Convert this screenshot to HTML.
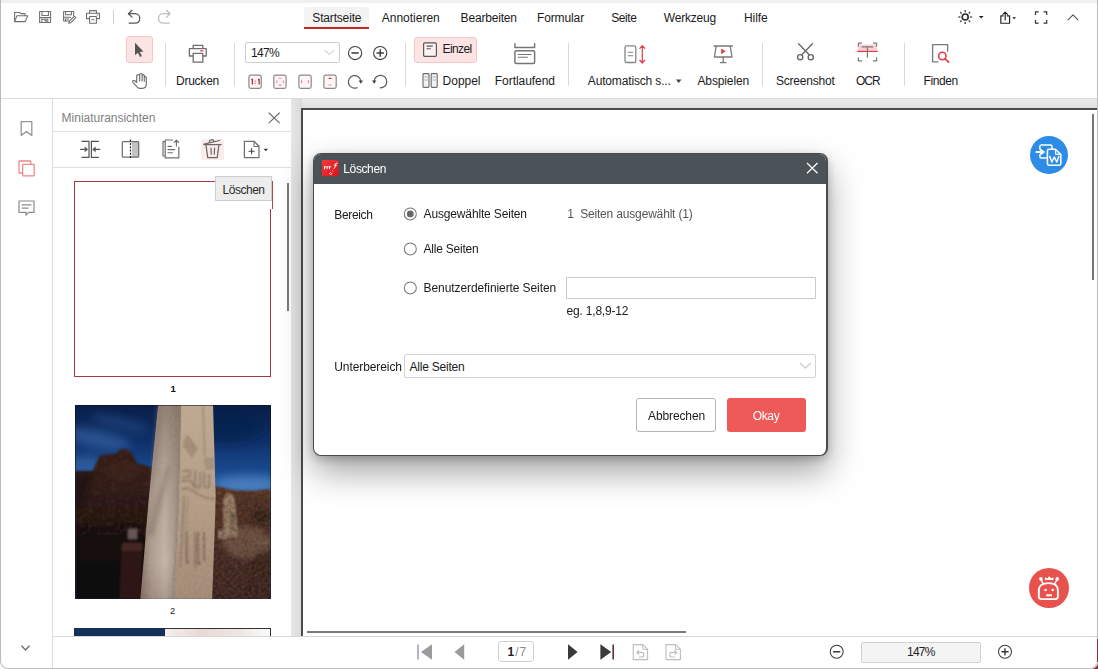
<!DOCTYPE html>
<html><head><meta charset="utf-8"><title>PDF</title>
<style>
html,body{margin:0;padding:0;}
body{width:1098px;height:669px;overflow:hidden;background:#fff;position:relative;
font-family:"Liberation Sans",sans-serif;}
.b{position:absolute;box-sizing:border-box;}
.t{position:absolute;white-space:pre;line-height:1;font-family:"Liberation Sans",sans-serif;}
svg{position:absolute;left:0;top:0;overflow:visible;}
</style></head><body>
<div class="b" style="left:0px;top:0px;width:1098px;height:3px;background:#f0f0f0;"></div>
<div class="b" style="left:1px;top:98px;width:1096px;height:1px;background:#dadada;"></div>
<div class="b" style="left:304px;top:7px;width:65px;height:21px;background:#f3f3f3;border-radius:3px 3px 0 0;"></div>
<div class="b" style="left:304px;top:27px;width:65px;height:2px;background:#c1272d;"></div>
<span class="t" style="left:312.30px;top:11.64px;font-size:12px;color:#1b1b1b;letter-spacing:-0.169px;">Startseite</span>
<span class="t" style="left:381.70px;top:11.64px;font-size:12px;color:#1b1b1b;letter-spacing:0.005px;">Annotieren</span>
<span class="t" style="left:460.60px;top:11.64px;font-size:12px;color:#1b1b1b;letter-spacing:-0.185px;">Bearbeiten</span>
<span class="t" style="left:537.00px;top:11.64px;font-size:12px;color:#1b1b1b;letter-spacing:-0.126px;">Formular</span>
<span class="t" style="left:611.20px;top:11.64px;font-size:12px;color:#1b1b1b;letter-spacing:-0.391px;">Seite</span>
<span class="t" style="left:663.80px;top:11.64px;font-size:12px;color:#1b1b1b;letter-spacing:-0.200px;">Werkzeug</span>
<span class="t" style="left:744.00px;top:11.64px;font-size:12px;color:#1b1b1b;letter-spacing:-0.081px;">Hilfe</span>
<div class="b" style="left:164.5px;top:43px;width:1px;height:43px;background:#d9d9d9;"></div>
<div class="b" style="left:233.5px;top:43px;width:1px;height:43px;background:#d9d9d9;"></div>
<div class="b" style="left:404.5px;top:43px;width:1px;height:43px;background:#d9d9d9;"></div>
<div class="b" style="left:568.0px;top:43px;width:1px;height:43px;background:#d9d9d9;"></div>
<div class="b" style="left:762.0px;top:43px;width:1px;height:43px;background:#d9d9d9;"></div>
<div class="b" style="left:903.5px;top:43px;width:1px;height:43px;background:#d9d9d9;"></div>
<div class="b" style="left:113px;top:10px;width:1px;height:14px;background:#d0d0d0;"></div>
<div class="b" style="left:126px;top:36px;width:27px;height:27px;background:#fce4e4;border:1px solid #f5c6c6;border-radius:3px;"></div>
<div class="b" style="left:245px;top:42px;width:95px;height:21px;background:#fff;border:1px solid #cfcfcf;border-radius:2px;"></div>
<span class="t" style="left:251.00px;top:46.84px;font-size:12px;color:#1b1b1b;letter-spacing:-0.673px;">147%</span>
<div class="b" style="left:414px;top:36.5px;width:63px;height:26.5px;background:#fce4e4;border:1px solid #f5c6c6;border-radius:3px;"></div>
<span class="t" style="left:442.60px;top:43.34px;font-size:12px;color:#1b1b1b;letter-spacing:-0.631px;">Einzel</span>
<span class="t" style="left:442.60px;top:74.84px;font-size:12px;color:#1b1b1b;letter-spacing:-0.021px;">Doppel</span>
<span class="t" style="left:176.00px;top:74.84px;font-size:12px;color:#1b1b1b;letter-spacing:-0.241px;">Drucken</span>
<span class="t" style="left:494.80px;top:74.84px;font-size:12px;color:#1b1b1b;letter-spacing:-0.046px;">Fortlaufend</span>
<span class="t" style="left:587.80px;top:74.84px;font-size:12px;color:#1b1b1b;letter-spacing:-0.154px;">Automatisch s...</span>
<span class="t" style="left:697.50px;top:74.84px;font-size:12px;color:#1b1b1b;letter-spacing:-0.134px;">Abspielen</span>
<span class="t" style="left:776.00px;top:74.84px;font-size:12px;color:#1b1b1b;letter-spacing:-0.210px;">Screenshot</span>
<span class="t" style="left:856.00px;top:74.84px;font-size:12px;color:#1b1b1b;letter-spacing:-0.989px;">OCR</span>
<span class="t" style="left:923.50px;top:74.84px;font-size:12px;color:#1b1b1b;letter-spacing:-0.382px;">Finden</span>
<div class="b" style="left:52px;top:99px;width:1px;height:570px;background:#dcdcdc;"></div>
<span class="t" style="left:61.60px;top:111.74px;font-size:12px;color:#808080;letter-spacing:-0.015px;">Miniaturansichten</span>
<div class="b" style="left:53px;top:131px;width:238px;height:1px;background:#e0e0e0;"></div>
<div class="b" style="left:53px;top:167px;width:238px;height:1px;background:#e0e0e0;"></div>
<div class="b" style="left:200.5px;top:138.5px;width:23px;height:21.5px;background:#fcebeb;border-radius:2px;"></div>
<div class="b" style="left:74px;top:181px;width:197px;height:196px;background:#fff;border:1px solid #a73a44;"></div>
<span class="t" style="left:170.40px;top:383.86px;font-size:9.5px;color:#111;font-weight:700;">1</span>
<span class="t" style="left:170.00px;top:607.13px;font-size:9.3px;color:#222;">2</span>
<div class="b" style="left:74px;top:628px;width:91px;height:8px;background:#15305a;"></div>
<div class="b" style="left:165px;top:628px;width:106px;height:8px;background:linear-gradient(90deg,#f4efee 0%,#ead9d3 35%,#efe6e2 70%,#fbfaf9 100%);border:1px solid #333;border-bottom:0;border-left:0;"></div>
<div class="b" style="left:287px;top:183px;width:2px;height:128px;background:#7b7b7b;"></div>
<div class="b" style="left:291px;top:99px;width:806px;height:9px;background:linear-gradient(180deg,#ebebeb,#dfdfdf);"></div>
<div class="b" style="left:291px;top:99px;width:10.5px;height:537px;background:linear-gradient(90deg,#e6e6e6,#dadada);"></div>
<div class="b" style="left:301px;top:107.8px;width:796px;height:2px;background:#4b4b4b;"></div>
<div class="b" style="left:301px;top:107.8px;width:2px;height:528px;background:#4b4b4b;"></div>
<div class="b" style="left:1092.3px;top:113.5px;width:2px;height:166px;background:#767676;"></div>
<div class="b" style="left:306.5px;top:631.3px;width:379px;height:2px;background:#7a7a7a;"></div>
<div class="b" style="left:53px;top:636px;width:1044px;height:1px;background:#d6d6d6;"></div>
<div class="b" style="left:53px;top:637px;width:1044px;height:31px;background:#fff;"></div>
<div class="b" style="left:498.3px;top:641.3px;width:35.6px;height:21px;background:#fff;border:1px solid #cfcfcf;border-radius:3px;"></div>
<span class="t" style="left:507.50px;top:646.14px;font-size:12px;color:#222;font-weight:700;">1</span>
<span class="t" style="left:515.20px;top:646.14px;font-size:12px;color:#8a8a8a;">/</span>
<span class="t" style="left:519.50px;top:646.14px;font-size:12px;color:#8a8a8a;">7</span>
<div class="b" style="left:861px;top:641.5px;width:119.5px;height:21px;background:#f4f4f4;border:1px solid #d2d2d2;border-radius:2px;"></div>
<span class="t" style="left:907.00px;top:646.14px;font-size:12px;color:#222;letter-spacing:-0.798px;">147%</span>
<div class="b" style="left:1030.1px;top:136px;width:38px;height:38px;background:#2c8ce6;border-radius:50%;"></div>
<div class="b" style="left:1029.1px;top:568px;width:39.7px;height:39.9px;background:#e9524c;border-radius:50%;"></div>
<div class="b" style="left:1090px;top:661px;width:8px;height:8px;background:#9a2a36;"></div>
<div class="b" style="left:1080px;top:650px;width:17.5px;height:18.5px;background:#fff;border-radius:0 0 7px 0;"></div>
<div class="b" style="left:0px;top:661px;width:8px;height:8px;background:#fff;"></div>
<div class="b" style="left:0px;top:-2px;width:1098px;height:671px;border:1px solid #bdbdbd;border-left-color:#b9b9b9;border-radius:0 0 8px 8px;"></div>
<div class="b" style="left:1097px;top:639px;width:1px;height:23px;background:#9a2a36;"></div>
<svg width="196.2" height="194.8" viewBox="0 0 196 195" preserveAspectRatio="none" style="left:74.5px;top:404.5px;overflow:hidden">
<defs>
<linearGradient id="sky" x1="0" y1="0" x2="0" y2="1"><stop offset="0" stop-color="#0a1f4a"/><stop offset="0.18" stop-color="#0f2f68"/><stop offset="0.34" stop-color="#1a4a90"/><stop offset="0.46" stop-color="#2b60a6"/></linearGradient>
<linearGradient id="rockL" x1="0" y1="0" x2="0" y2="1"><stop offset="0" stop-color="#382017"/><stop offset="0.3" stop-color="#2f1a14"/><stop offset="0.48" stop-color="#24130f"/><stop offset="0.56" stop-color="#150b0d"/><stop offset="1" stop-color="#0d0709"/></linearGradient>
<linearGradient id="rockR" x1="0" y1="0" x2="0" y2="1"><stop offset="0" stop-color="#54301d"/><stop offset="0.35" stop-color="#47291d"/><stop offset="1" stop-color="#331c17"/></linearGradient>
<linearGradient id="pl" x1="0" y1="0" x2="1" y2="0"><stop offset="0" stop-color="#857063"/><stop offset="0.25" stop-color="#ab9a8c"/><stop offset="0.6" stop-color="#c3b5a9"/><stop offset="1" stop-color="#9c897b"/></linearGradient>
<linearGradient id="plv" x1="0" y1="0" x2="0" y2="1"><stop offset="0" stop-color="#6f5c52" stop-opacity=".6"/><stop offset="0.4" stop-color="#7a675c" stop-opacity=".2"/><stop offset="0.8" stop-color="#7a675c" stop-opacity="0"/><stop offset="1" stop-color="#6a564c" stop-opacity=".3"/></linearGradient>
<linearGradient id="pr" x1="0" y1="0" x2="0" y2="1"><stop offset="0" stop-color="#bda891"/><stop offset="0.5" stop-color="#b39c86"/><stop offset="1" stop-color="#a08873"/></linearGradient>
<filter id="b1" x="-10%" y="-10%" width="120%" height="120%"><feGaussianBlur stdDeviation="0.8"/></filter>
<filter id="b2" x="-20%" y="-20%" width="140%" height="140%"><feGaussianBlur stdDeviation="2.2"/></filter>
<filter id="b5" x="-30%" y="-30%" width="160%" height="160%"><feGaussianBlur stdDeviation="5"/></filter>
<filter id="gr" x="0" y="0" width="100%" height="100%"><feTurbulence type="fractalNoise" baseFrequency="0.3" numOctaves="3" seed="7"/><feColorMatrix values="0 0 0 0 0.62  0 0 0 0 0.52  0 0 0 0 0.44  0.8 0.8 0.8 0 -0.9"/><feGaussianBlur stdDeviation="0.5"/><feComposite in2="SourceAlpha" operator="in"/></filter>
<filter id="grD" x="0" y="0" width="100%" height="100%"><feTurbulence type="fractalNoise" baseFrequency="0.22" numOctaves="3" seed="3"/><feColorMatrix values="0 0 0 0 0.06  0 0 0 0 0.03  0 0 0 0 0.03  1.3 1.3 0 0 -1.1"/><feGaussianBlur stdDeviation="0.6"/><feComposite in2="SourceAlpha" operator="in"/></filter>
<clipPath id="cR"><path d="M135 80 L140 81 L160 85.5 L178 86 L196 84 L196 195 L135 195Z"/></clipPath>
<clipPath id="cL"><path d="M0 66 L18 66 L22 56 L25.4 50.2 L41.5 48.8 L46 43.7 L52 44.5 L56 47.3 L62 58.3 L75 62 L85 66 L85 195 L0 195Z"/></clipPath>
</defs>
<rect width="196" height="195" fill="url(#sky)"/>
<g filter="url(#b5)"><ellipse cx="22" cy="34" rx="34" ry="9" fill="#3f6fae" opacity=".55" transform="rotate(12 22 34)"/><ellipse cx="10" cy="60" rx="26" ry="8" fill="#3c6cac" opacity=".6"/><ellipse cx="45" cy="18" rx="30" ry="5" fill="#2f5c9c" opacity=".45" transform="rotate(14 45 18)"/>
<ellipse cx="172" cy="80" rx="34" ry="9" fill="#4f82c2" opacity=".85"/><ellipse cx="150" cy="20" rx="40" ry="18" fill="#0a1d48" opacity=".55"/></g>
<g filter="url(#b1)">
<path d="M0 66 L18 66 L22 56 L25.4 50.2 L41.5 48.8 L46 43.7 L52 44.5 L56 47.3 L62 58.3 L75 62 L85 66 L85 195 L0 195Z" fill="url(#rockL)"/>
<path d="M135 80 L140 81 L160 85.5 L178 86 L196 84 L196 195 L135 195Z" fill="url(#rockR)"/>
</g>
<g clip-path="url(#cL)"><rect width="90" height="130" fill="#000" filter="url(#grD)" opacity=".55"/>
<g filter="url(#b2)"><path d="M0 70 L18 68 L8 100 L0 105Z" fill="#1a0f0e" opacity=".7"/><ellipse cx="48" cy="66" rx="18" ry="10" fill="#4a2a1c" opacity=".3"/></g>
<g filter="url(#b1)"><rect x="52.5" y="123.6" width="10" height="11" fill="#655555"/><path d="M47 138 L67.5 138 L66.5 195 L44 195Z" fill="#2f1614"/><path d="M47 138 L67.5 138 L67.3 146 L46.5 146Z" fill="#452823"/></g>
</g>
<g clip-path="url(#cR)">
<g filter="url(#b2)"><ellipse cx="172" cy="138" rx="24" ry="16" fill="#755847" opacity=".7"/><ellipse cx="186" cy="112" rx="10" ry="9" fill="#2a1512" opacity=".85"/><ellipse cx="188" cy="160" rx="12" ry="14" fill="#2c1714" opacity=".7"/><ellipse cx="155" cy="175" rx="16" ry="16" fill="#3a241d" opacity=".7"/><ellipse cx="168" cy="98" rx="26" ry="6" fill="#40261d" opacity=".6"/></g>
<path d="M148.5 133 L148 97 C148 86 158 85 160 96 L163 131Z" fill="#93795f" filter="url(#b1)"/>
<path d="M155.5 108 c3 -3 6 2 5 9 c-1 8 -5 10 -6 4z" fill="#6d5846" filter="url(#b1)" opacity=".8"/>
<rect x="143" y="125" width="8" height="9" fill="#8b7a6b" filter="url(#b1)"/>
<rect x="135" y="80" width="61" height="115" filter="url(#gr)" opacity=".22"/>
<rect x="135" y="80" width="61" height="115" fill="#000" filter="url(#grD)" opacity=".5"/>
</g>
<!-- pillar -->
<path d="M83.2 0 L105.7 0 L103.5 100 L98 195 L65.3 195 L73.5 96Z" fill="url(#pl)"/>
<path d="M83.2 0 L105.7 0 L103.5 100 L98 195 L65.3 195 L73.5 96Z" fill="url(#plv)"/>
<path d="M105.7 0 L137.9 0 L140.5 90 L140 112 L137 195 L98 195 L103.5 100Z" fill="url(#pr)"/>
<g filter="url(#b1)" fill="none" stroke="#8a7562" stroke-linecap="round">
<path d="M104.8 0 L102.6 100 L97.2 195" stroke="#8f7d70" stroke-width="1.6" opacity=".7"/>
<path d="M128 0 L129.5 50" stroke-width="1.3" opacity=".8"/>
<path d="M109 36 l10 13 M110.5 33.5 l10 13 M112 31 l9.5 12.5 M108.5 40 l9 12" stroke-width="1.4"/>
<path d="M130 54 h8 M129.5 57 h9 M130 60 h8.5 M131 63 h7" stroke-width="1.2"/>
<path d="M108 66 h7 v6 h-7 M107 76 h9 l3 6 M120 66 v14 q1 4 5 2 v-14 M129 68 v12 q1 4 5 2 v-12 M107 84 q8 -2 14 4 q8 6 18 6" stroke-width="1.7"/>
<path d="M109 92 L106 150 Q105.5 158 104.5 162" stroke-width="1.6"/>
<path d="M113 92 L111 124" stroke-width="1.1" opacity=".7"/>
<path d="M111.5 127 v30 q0.5 3 1.8 0 M120 128 v34 M123 128 v30 q0.8 3 2 0 M129 128 v28" stroke="#7a6450" stroke-width="1.8"/>
<path d="M119.5 128 L119 195" stroke="#9a8570" stroke-width="1" opacity=".7"/>
</g>
<path d="M83.2 0 L105.7 0 L103.5 100 L98 195 L65.3 195 L73.5 96Z" filter="url(#gr)" opacity=".18"/>
<path d="M105.7 0 L137.9 0 L140.5 90 L140 112 L137 195 L98 195 L103.5 100Z" filter="url(#gr)" opacity=".22"/>
<g filter="url(#b2)" opacity=".6"><path d="M70 130 L92 60 L96 62 L78 132Z" fill="#8d7b70"/><path d="M82 0 L90 0 L80 70 L75 90Z" fill="#8b776b" opacity=".7"/></g>
<rect x=".5" y=".5" width="195" height="194" fill="none" stroke="#111" stroke-opacity=".55" stroke-width="1"/>
</svg>
<svg width="1098" height="669" viewBox="0 0 1098 669" fill="none" stroke-linecap="round" stroke-linejoin="round">
<g stroke="#6f6f6f" stroke-width="1.05"><path d="M14.6 21.6 V12.4 H19.6 L20.8 13.6 H25 V15.6"/><path d="M14.6 21.6 L16.9 15.7 H27.7 L25.2 21.6 Z"/><path d="M39.6 11.4 H50.6 V22.5 H39.6 Z"/><path d="M42 11.6 V15.4 H48.4 V11.6"/><path d="M39.8 17.6 H50.4"/><path d="M41.8 22.3 V19.3 H47.8 V22.3"/><path d="M44.8 20.6 H46.2 V22"/><path d="M69.5 21 H63.6 V11.4 H73.6 V15.5"/><path d="M65.6 11.6 V14.8 H71.4 V11.6"/><path d="M63.8 17.2 H70.6"/><path d="M65.4 20.8 V19 H68.6"/><path d="M68.8 23.3 L69.4 21.2 L74.4 16.2 L75.8 17.6 L70.8 22.7 Z"/><path d="M89.6 13.2 V10.6 H96.4 V13.2"/><path d="M89.4 18.6 H86.5 V13.3 H99.5 V18.6 H96.6"/><path d="M89.6 16.4 H96.4 V23.3 H89.6 Z"/><path d="M91.8 19.8 H94.2"/><path d="M97.2 15 H97.8"/></g>
<g stroke-width="1.25"><path d="M131.9 10.3 L128.4 13.7 L131.9 17.1 M128.6 13.7 H135 C141.4 13.7 141.4 23.2 135 23.2 H129.2" stroke="#555"/><path d="M166.5 10.3 L170 13.7 L166.5 17.1 M169.8 13.7 H163.3 C156.9 13.7 156.9 23.2 163.3 23.2 H169.2" stroke="#bdbdbd"/></g>
<path d="M135 42.8 V55.3 L137.9 52.7 L140 57 L141.9 56.1 L139.8 51.9 L143.4 51.4 Z" fill="#555" stroke="none"/>
<path d="M136.7 82.5 L134.7 80.7 C133.5 79.7 131.9 81.1 132.9 82.4 L137.5 87.3 C138.2 88 139 88.3 140 88.3 H142.4 C144.8 88.3 146.3 86.7 146.3 84.3 V77.7 C146.3 76.3 144.3 76.3 144.3 77.7 V75.7 C144.3 74.3 142.1 74.3 142.1 75.7 V74.6 C142.1 73.1 139.7 73.1 139.7 74.6 V75.8 C139.7 74.3 136.7 74.3 136.7 75.9 Z M139.7 75 V81 M142.1 75.6 V81 M144.3 77.6 V81.3" stroke="#6f6f6f" stroke-width="1.15"/>
<g stroke="#6f6f6f" stroke-width="1.3"><path d="M193.2 48.4 V45.3 H202.8 V48.4"/><path d="M192.8 56 H189.4 V48.6 H206.2 V56 H203.2"/><path d="M193.2 53.4 H202.8 V62.2 H193.2 Z" fill="#fff"/></g><path d="M200.6 50.8 H203" stroke="#e0404a" stroke-width="1.2"/>
<path d="M324.8 50.4 L329.3 54.3 L333.8 50.4" stroke="#cfcfcf" stroke-width="1.1"/>
<circle cx="355.1" cy="53" r="6.6" stroke="#3a3a3a" stroke-width="1.05"/><path d="M351.90000000000003 53 H358.3" stroke="#3a3a3a" stroke-width="1.4"/>
<circle cx="380.2" cy="53" r="6.6" stroke="#3a3a3a" stroke-width="1.05"/><path d="M377.0 53 H383.4" stroke="#3a3a3a" stroke-width="1.4"/>
<path d="M380.2 49.8 V56.2" stroke="#3a3a3a" stroke-width="1.4"/>
<rect x="248.9" y="75.1" width="12.3" height="13.2" rx="1.8" fill="#fef6f6" stroke="#8a8a8a" stroke-width="1.2"/>
<rect x="273.8" y="75.1" width="12.3" height="13.2" rx="1.8" fill="#fef6f6" stroke="#8a8a8a" stroke-width="1.2"/>
<rect x="298.9" y="75.1" width="12.3" height="13.2" rx="1.8" fill="#fef6f6" stroke="#8a8a8a" stroke-width="1.2"/>
<rect x="323.9" y="75.1" width="12.3" height="13.2" rx="1.8" fill="#fef6f6" stroke="#8a8a8a" stroke-width="1.2"/>
<g stroke="#b5303c" stroke-width="1.3" stroke-linecap="butt"><path d="M251.3 80 L252.4 79.2 V84.6 M258 80 L259.1 79.2 V84.6"/><path d="M255.2 80.6 V81.6 M255.2 82.8 V83.8" stroke-width="1"/></g>
<g stroke="#e58a92" stroke-width="1.1"><path d="M279 78.3 H281 M279 85.1 H281 M276.8 80.8 V82.8 M283.3 80.8 V82.8"/><path d="M301.6 80.6 V82.8 M308.4 80.6 V82.8"/><path d="M329 78.4 H331" stroke="#c0404c"/><path d="M329 85 H331"/></g>
<g stroke="#5a5a5a" stroke-width="1.2"><path d="M357 87.7 A6.3 6.3 0 1 1 360.9 81"/><path d="M380.2 87.9 A6.3 6.3 0 1 0 374.2 81"/></g><path d="M358.6 80.6 H363 L360.8 83.8 Z M372 80.6 H376.4 L374.2 83.8 Z" fill="#444" stroke="none"/>
<rect x="423.6" y="42.9" width="12.8" height="13.4" rx="1" fill="#fdf1f1" stroke="#585858" stroke-width="1.2"/><path d="M427 46.1 H432.4 M427 48.8 H430.4" stroke="#585858" stroke-width="1.1"/>
<g stroke="#6f6f6f" stroke-width="1.15"><rect x="423" y="73.6" width="6" height="13.8" rx=".8" fill="#f3f3f3"/><rect x="431.2" y="73.6" width="6" height="13.8" rx=".8" fill="#f3f3f3"/><path d="M424.6 77 H427.4 M424.6 80 H427.4 M432.8 77 H435.6 M432.8 80 H435.6" stroke="#b0b0b0" stroke-width="1"/></g>
<g stroke="#757575" stroke-width="1.45"><path d="M514.9 43.8 V47.4 H534.6 V43.8"/><rect x="514.9" y="50.8" width="19.7" height="12.6" rx="1.2"/><path d="M518.2 54.5 H531.2 M518.2 57.3 H527.4" stroke-width="1.1"/></g>
<rect x="625" y="45.9" width="10.8" height="16.6" rx="1.6" stroke="#858585" stroke-width="1.3"/><path d="M628.2 52.3 H632.8 M628.2 55.7 H632.8" stroke="#858585" stroke-width="1.1"/>
<path d="M642.3 46 V62.6 M639.8 48.4 L642.3 45.6 L644.8 48.4 M639.8 60.2 L642.3 63 L644.8 60.2" stroke="#e0404a" stroke-width="1.25"/>
<path d="M675.9 79.5 H681.5 L678.7 82.9 Z" fill="#444" stroke="none"/>
<g stroke="#7a7a7a" stroke-width="1.3"><path d="M714 46 H732.4"/><path d="M716.2 46.2 L714.4 57 H732 L730.2 46.2"/><path d="M723.2 57.2 V62.4 M720.4 62.6 H726"/></g><path d="M721.2 48.4 V54.2 L725.8 51.3 Z" fill="#e0404a" stroke="none"/>
<g stroke="#6a6a6a" stroke-width="1.4"><path d="M798.6 43.8 L809.4 55 M812.4 43.8 L801.6 55"/><circle cx="800.2" cy="57.2" r="2.6"/><circle cx="810.8" cy="57.2" r="2.6"/></g>
<rect x="858" y="44.6" width="19" height="6.2" fill="#fbd0d3" stroke="none"/><g stroke="#7a7a7a" stroke-width="1.25"><path d="M858.4 46 V43.1 H861.6 M873.4 43.1 H876.6 V46 M858.4 57.8 V60.9 H861.6 M873.4 60.9 H876.6 V57.8"/><path d="M862 46.8 H872.8 M867.4 46.8 V57.2"/></g><path d="M857.6 51.3 H877.4" stroke="#e0404a" stroke-width="1.3"/>
<path d="M938 61.8 H932.6 V44.6 H947.6 V51.2" stroke="#7a7a7a" stroke-width="1.3"/><circle cx="942.3" cy="56" r="3.7" stroke="#e0404a" stroke-width="1.6"/><path d="M945.1 58.8 L948.6 62.2" stroke="#e0404a" stroke-width="1.7"/>
<g stroke="#2a2a2a"><circle cx="965.2" cy="17" r="3" stroke-width="1.6"/><path d="M965.2 10.8 V11.5 M965.2 22.5 V23.2 M959 17 H959.7 M970.7 17 H971.4 M960.7 12.5 L961.2 13 M969.2 21 L969.7 21.5 M960.7 21.5 L961.2 21 M969.2 13 L969.7 12.5" stroke="#555" stroke-width="1.7"/></g><path d="M978.8 16 H983.6 L981.2 18.5 Z" fill="#222" stroke="none"/>
<g stroke="#222" stroke-width="1.15"><path d="M1003.2 15.8 H1000.8 V23.2 H1009.6 V15.8 H1007.2"/><path d="M1005.2 20 V12.2 M1002.9 14.4 L1005.2 12.1 L1007.5 14.4"/></g><path d="M1012.2 17.2 H1016 L1014.1 19.2 Z" fill="#222" stroke="none"/>
<path d="M1035.5 15 V11.8 H1038.6 M1043.6 11.8 H1046.7 V15 M1035.5 20 V23.2 H1038.6 M1043.6 23.2 H1046.7 V20" stroke="#333" stroke-width="1.2" stroke-linecap="butt" stroke-linejoin="miter"/>
<path d="M1068 19.8 L1073 14.8 L1078 19.8" stroke="#555" stroke-width="1.1"/>
<path d="M21.2 121.6 H31.8 V135.4 L26.5 131.6 L21.2 135.4 Z" stroke="#969696" stroke-width="1.3"/>
<g stroke="#f08888" stroke-width="1.3"><rect x="19" y="161" width="11.8" height="12" rx=".7"/><rect x="22.6" y="164.3" width="11.6" height="11.6" rx=".7" fill="#fff"/></g>
<g stroke="#8a8a8a" stroke-width="1.2"><path d="M19 201 H34 V212.4 H28.6 L26 215.2 V212.4 H19 Z"/><path d="M22.2 204.8 H31 M22.2 208.1 H28"/></g>
<path d="M21.8 646 L25.5 650 L29.2 646" stroke="#666" stroke-width="1.2"/>
<path d="M269 113 L279.4 122.8 M279.4 113 L269 122.8" stroke="#6a6a6a" stroke-width="1.1"/>
<g stroke="#555" stroke-width="1.2"><path d="M82 141.4 H89 V157.4 H82 M98.4 141.4 H91.4 V157.4 H98.4"/><path d="M80.6 149.4 H86 M99.8 149.4 H94.4"/><path d="M85.2 147.3 L87.8 149.4 L85.2 151.5 Z M95.2 147.3 L92.6 149.4 L95.2 151.5 Z" fill="#555" stroke-width=".6"/></g>
<rect x="132" y="141.6" width="6.6" height="15.6" fill="#c2c2c2" stroke="none"/><rect x="122.3" y="141.6" width="16.4" height="15.6" rx="1" stroke="#6f6f6f" stroke-width="1.25"/><path d="M130.5 139.6 V159" stroke="#2a2a2a" stroke-width="1.25" stroke-dasharray="2 1.3" stroke-linecap="butt"/>
<g stroke="#6f6f6f" stroke-width="1.2"><path d="M165 141.6 H163 V156 H165 M165.2 157.8 H178.8 V147 M165.2 157.8 V140 H172.6" fill="none"/><path d="M176.4 146 V140.4 M174.2 142.4 L176.4 140.2 L178.6 142.4"/><path d="M168 146.4 H171.4 M168 149.6 H174.8 M168 152.8 H172.6" stroke-width="1.1"/></g>
<g stroke="#6a6a6a" stroke-width="1.25"><path d="M203.8 144.5 H221.2"/><path d="M204 144.1 L219.6 140.5 M209.2 142.6 L209.7 140.5 L212.9 139.7 L214 141.5"/><path d="M206 144.8 L207.7 157.7 H217.2 L218.9 144.8"/><path d="M211 148 L211.3 154.2 M214.6 148 L214.3 154.2" stroke-width="1.2"/></g>
<g stroke="#6f6f6f" stroke-width="1.25"><path d="M244.4 141.3 H254 L259 146.3 V157.5 H244.4 Z"/><path d="M254 141.5 V146.4 H258.8" stroke-width="1.05"/><path d="M249 151.2 H254.2 M251.6 148.6 V153.8" stroke="#444" stroke-width="1.1"/></g><path d="M263.6 148.8 H268 L265.8 151.2 Z" fill="#333" stroke="none"/>
<g stroke="#fff" fill="none"><path d="M1039.9 149.2 V146.6 C1039.9 145.6 1040.5 145 1041.5 145 H1050.4 C1051.4 145 1052 145.6 1052 146.6 V148.4 M1039.9 154.8 V156.4 C1039.9 157.4 1040.5 158 1041.5 158 H1046" stroke-width="1.5"/><path d="M1036.4 152 H1042" stroke-width="1.9"/><path d="M1041 149.4 L1044.6 152 L1041 154.6 Z" fill="#fff" stroke-width="1"/><path d="M1047.4 150.8 C1047.4 149.8 1048 149.2 1049 149.2 H1055.4 L1060.8 154.6 V163.6 C1060.8 164.6 1060.2 165.2 1059.2 165.2 H1049 C1048 165.2 1047.4 164.6 1047.4 163.6 Z" stroke-width="1.6" fill="#2c8ce6"/><path d="M1055.6 149.6 V153.2 C1055.6 154 1056 154.4 1056.8 154.4 H1060.4" stroke-width="1.3"/><path d="M1049.8 156.4 L1051.8 162 L1054.3 157 L1056.8 162 L1058.8 156.4" stroke-width="1.5"/></g>
<g stroke="#fff" fill="none"><path d="M1038.8 596.6 V590.4 C1038.8 585.6 1042.8 583.1 1048.4 583.1 C1054 583.1 1057.9 585.6 1057.9 590.4 V596.6 C1057.9 598.2 1056.9 599.1 1055.3 599.1 H1041.4 C1039.8 599.1 1038.8 598.2 1038.8 596.6 Z" stroke-width="1.9"/><path d="M1041.2 579.6 L1043.4 584.4 M1057 579.6 L1054.6 584" stroke-width="1.5"/><path d="M1046.2 595.3 H1052" stroke-width="2" stroke-linecap="butt"/></g><circle cx="1040.9" cy="578.9" r="1.8" fill="#fff" stroke="none"/><circle cx="1057.2" cy="578.9" r="1.8" fill="#fff" stroke="none"/><path d="M1044.8 580 L1045.2 577.2 L1047.2 578.6 L1049.2 576.2 L1051.2 578.6 L1053.2 577.2 L1053.6 580 Z" fill="#fff" stroke="none"/><circle cx="1045.6" cy="590.1" r="1.25" fill="#fff" stroke="none"/><circle cx="1052.7" cy="590.1" r="1.25" fill="#fff" stroke="none"/>
<path d="M418 644.4 V659.6" stroke="#a8a0b8" stroke-width="1.6" stroke-linecap="butt"/><path d="M432 644.2 V659.8 L421 652 Z" fill="#9a9a9a" stroke="none"/><path d="M464.2 644.2 V659.8 L454.6 652 Z" fill="#9a9a9a" stroke="none"/><path d="M568 644.2 V659.8 L577.6 652 Z" fill="#3a3a3a" stroke="none"/><path d="M600.4 644.2 V659.8 L611.2 652 Z" fill="#3a3a3a" stroke="none"/><path d="M613.2 644.4 V659.6" stroke="#5a3030" stroke-width="1.6" stroke-linecap="butt"/>
<g stroke="#bdbdbd" stroke-width="1.1"><path d="M633.2 644.6 H642.8000000000001 L647.6 649.4 V659.6 H633.2 Z"/><path d="M642.8000000000001 644.8 V649.4 H647.4000000000001" stroke-width="1"/><path d="M638.8000000000001 650.4 L636.8000000000001 652.4 L638.8000000000001 654.4 M637.0 652.4 H641.8000000000001 C644.6 652.4 644.6 657 641.8000000000001 657 H639.2"/></g>
<g stroke="#bdbdbd" stroke-width="1.1"><path d="M666 644.6 H675.6 L680.4 649.4 V659.6 H666 Z"/><path d="M675.6 644.8 V649.4 H680.2" stroke-width="1"/><path d="M674.8 650.4 L676.8 652.4 L674.8 654.4 M676.6 652.4 H671.8 C669 652.4 669 657 671.8 657 H674.4"/></g>
<circle cx="836.7" cy="651.8" r="6.5" stroke="#3a3a3a" stroke-width="1.05"/><path d="M833.6 651.8 H839.8000000000001" stroke="#3a3a3a" stroke-width="1.4"/>
<circle cx="1005" cy="651.8" r="6.5" stroke="#3a3a3a" stroke-width="1.05"/><path d="M1001.9 651.8 H1008.1" stroke="#3a3a3a" stroke-width="1.4"/>
<path d="M1005 648.7 V654.9" stroke="#3a3a3a" stroke-width="1.4"/>
</svg>
<div class="b" style="left:271.9px;top:181px;width:1px;height:27.5px;background:#b5414e;"></div>
<div class="b" style="left:270.4px;top:181px;width:1.6px;height:27.5px;background:#fff;"></div>
<div class="b" style="left:215.2px;top:176.1px;width:56.6px;height:25.3px;background:#ededed;border:1px solid #cdcdcd;"></div>
<span class="t" style="left:222.60px;top:183.64px;font-size:12px;color:#2c2c2c;letter-spacing:-0.496px;">Löschen</span>
<div class="b" style="left:313px;top:153px;width:515px;height:303px;border-radius:8px;background:#fff;border:1px solid #474c51;border-right-width:2px;box-shadow:0 16px 34px 0px rgba(0,0,0,.36),0 3px 10px rgba(0,0,0,.22);overflow:hidden;"><div class="b" style="left:0;top:0;width:515px;height:30px;background:#4b5359;"></div></div>
<svg width="17" height="17" viewBox="0 0 17 17" style="left:321.8px;top:159.8px"><defs><linearGradient id="ai" x1="0" y1="0" x2="1" y2="1"><stop offset="0" stop-color="#f03a3e"/><stop offset="1" stop-color="#dc1219"/></linearGradient></defs><rect width="16.4" height="16.2" rx=".8" fill="url(#ai)"/><g stroke="#fff" stroke-width=".95" fill="none" stroke-linecap="round"><path d="M2.5 8.8 V6.5 M2.5 7.3 q0.4 -0.9 1.3 -0.7 M5 8.8 V6.5 M5 7.3 q0.4 -0.9 1.3 -0.7 M7.5 8.8 V6.5 M7.5 7.3 q0.4 -0.9 1.3 -0.7"/><path d="M15.4 3.1 q-1.7 -0.6 -2 1.1 V6.2 q0 1.6 -1.4 2.2 M12.2 5.2 h2.4"/><path d="M10.4 10.6 l0.5 0.5" stroke-width=".8"/></g><rect x="7.8" y="12.8" width="1.7" height="1.7" transform="rotate(45 8.65 13.65)" stroke="#fff" stroke-width=".8" fill="none"/></svg>
<span class="t" style="left:343.30px;top:162.84px;font-size:12px;color:#fff;letter-spacing:-0.381px;">Löschen</span>
<span class="t" style="left:334.30px;top:208.64px;font-size:12px;color:#1b1b1b;letter-spacing:-0.341px;">Bereich</span>
<span class="t" style="left:423.60px;top:208.24px;font-size:12px;color:#1b1b1b;letter-spacing:-0.154px;">Ausgewählte Seiten</span>
<span class="t" style="left:567.30px;top:208.24px;font-size:12px;color:#555;letter-spacing:-0.171px;">1  Seiten ausgewählt (1)</span>
<span class="t" style="left:423.60px;top:243.14px;font-size:12px;color:#1b1b1b;letter-spacing:-0.234px;">Alle Seiten</span>
<span class="t" style="left:423.60px;top:282.04px;font-size:12px;color:#1b1b1b;letter-spacing:-0.090px;">Benutzerdefinierte Seiten</span>
<div class="b" style="left:566px;top:277px;width:250px;height:22px;background:#fff;border:1px solid #cbcbcb;"></div>
<span class="t" style="left:566.60px;top:304.74px;font-size:12px;color:#1b1b1b;letter-spacing:-0.204px;">eg. 1,8,9-12</span>
<span class="t" style="left:334.30px;top:360.74px;font-size:12px;color:#1b1b1b;letter-spacing:-0.092px;">Unterbereich</span>
<div class="b" style="left:403.5px;top:354.2px;width:412.5px;height:23.5px;background:#fff;border:1px solid #d3d3d3;border-radius:2px;"></div>
<span class="t" style="left:409.60px;top:360.74px;font-size:12px;color:#1b1b1b;letter-spacing:-0.234px;">Alle Seiten</span>
<div class="b" style="left:636px;top:398.3px;width:80px;height:33.7px;background:#fff;border:1px solid #b5b5b5;border-radius:3px;"></div>
<span class="t" style="left:648.10px;top:409.84px;font-size:12px;color:#1b1b1b;letter-spacing:-0.127px;">Abbrechen</span>
<div class="b" style="left:726.5px;top:398.3px;width:79px;height:33.7px;background:#ee5a57;border-radius:3px;"></div>
<span class="t" style="left:752.70px;top:409.84px;font-size:12px;color:#fff;letter-spacing:-0.327px;">Okay</span>
<svg width="1098" height="669" viewBox="0 0 1098 669" fill="none"><path d="M807 163 L817.5 173.3 M817.5 163 L807 173.3" stroke="#fff" stroke-width="1.2"/><circle cx="410.3" cy="213.9" r="6" stroke="#787878" stroke-width="1.05" fill="#fff"/><circle cx="410.3" cy="213.9" r="3.4" fill="#666"/><circle cx="410.3" cy="248.9" r="6" stroke="#787878" stroke-width="1.05" fill="#fff"/><circle cx="410.3" cy="287.9" r="6" stroke="#787878" stroke-width="1.05" fill="#fff"/><path d="M800 363 L805.3 368.2 L810.7 363" stroke="#c9c9c9" stroke-width="1.2"/></svg>
</body></html>
